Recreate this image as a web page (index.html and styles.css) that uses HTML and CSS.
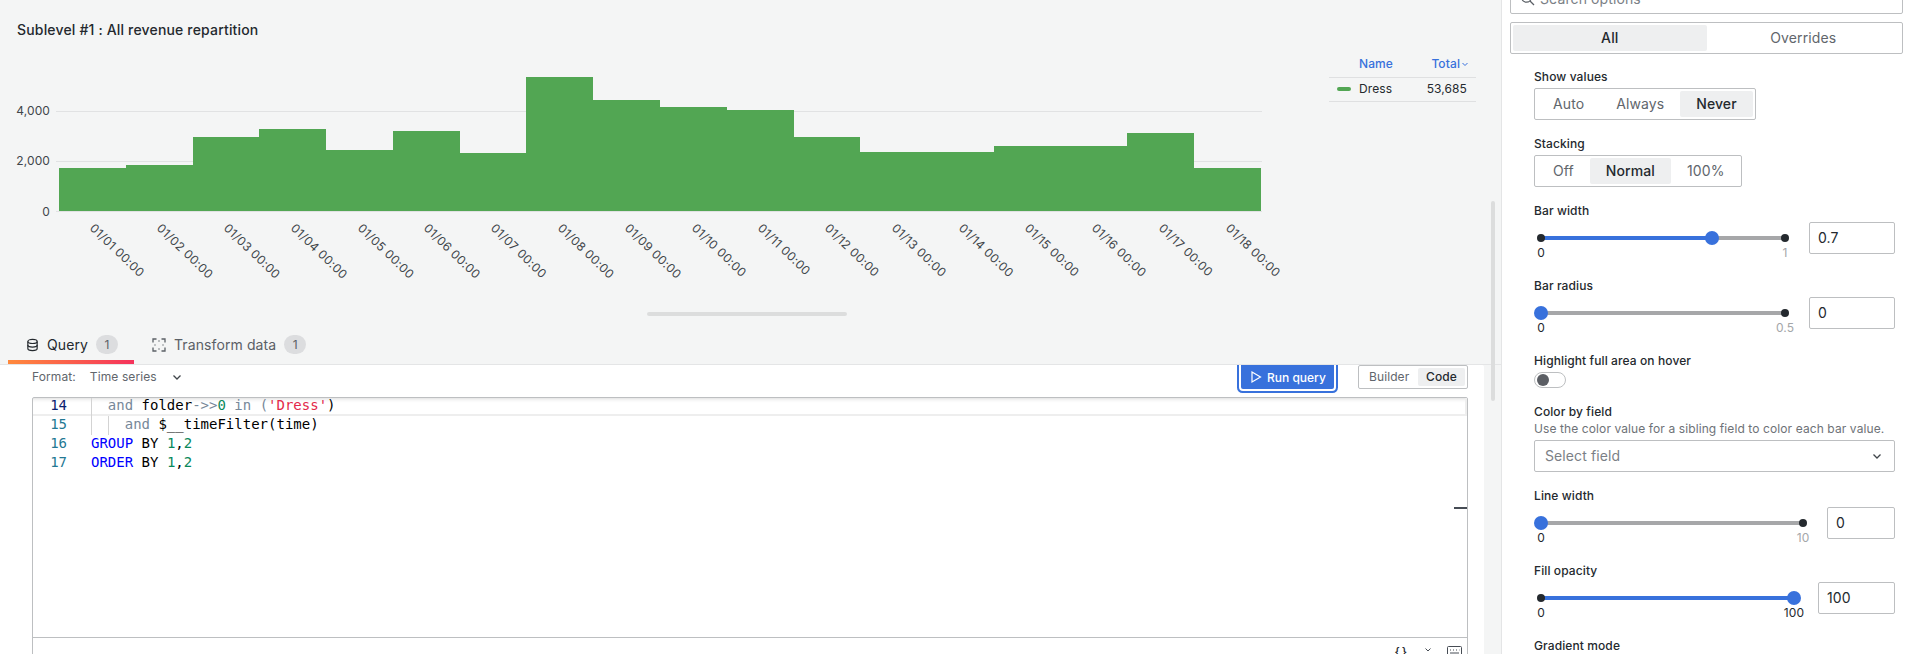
FILE: index.html
```html
<!DOCTYPE html>
<html lang="en">
<head>
  <meta charset="UTF-8" />
  <title>Edit panel</title>
  <link rel="stylesheet" href="styles.css">
</head>
<body>
  <div class="main">
    <div class="panel">
      <h2 class="panel-title">Sublevel #1 : All revenue repartition</h2>
      <div class="panel-body">
        <svg class="chart" width="1300" height="275" viewBox="0 50 1300 275">
          <g class="grid">
            <line x1="56" y1="111.5" x2="1262" y2="111.5" />
            <line x1="56" y1="161.5" x2="1262" y2="161.5" />
            <line x1="56" y1="211.5" x2="1262" y2="211.5" />
          </g>
          <g class="y-labels">
            <text x="50" y="115">4,000</text>
            <text x="50" y="165">2,000</text>
            <text x="50" y="216">0</text>
          </g>
          <g class="bars">
            <rect x="59" y="168" width="67" height="43" />
            <rect x="126" y="165" width="67" height="46" />
            <rect x="193" y="137" width="66" height="74" />
            <rect x="259" y="129" width="67" height="82" />
            <rect x="326" y="150" width="67" height="61" />
            <rect x="393" y="131" width="67" height="80" />
            <rect x="460" y="153" width="66" height="58" />
            <rect x="526" y="77" width="67" height="134" />
            <rect x="593" y="100" width="67" height="111" />
            <rect x="660" y="107" width="67" height="104" />
            <rect x="727" y="110" width="67" height="101" />
            <rect x="794" y="137" width="66" height="74" />
            <rect x="860" y="152" width="67" height="59" />
            <rect x="927" y="152" width="67" height="59" />
            <rect x="994" y="146" width="66" height="65" />
            <rect x="1060" y="146" width="67" height="65" />
            <rect x="1127" y="133" width="67" height="78" />
            <rect x="1194" y="168" width="67" height="43" />
          </g>
          <g class="x-labels">
            <text transform="translate(89 229) rotate(44)">01/01 00:00</text>
            <text transform="translate(156 229) rotate(44)">01/02 00:00</text>
            <text transform="translate(223 229) rotate(44)">01/03 00:00</text>
            <text transform="translate(290 229) rotate(44)">01/04 00:00</text>
            <text transform="translate(357 229) rotate(44)">01/05 00:00</text>
            <text transform="translate(423 229) rotate(44)">01/06 00:00</text>
            <text transform="translate(490 229) rotate(44)">01/07 00:00</text>
            <text transform="translate(557 229) rotate(44)">01/08 00:00</text>
            <text transform="translate(624 229) rotate(44)">01/09 00:00</text>
            <text transform="translate(691 229) rotate(44)">01/10 00:00</text>
            <text transform="translate(757 229) rotate(44)">01/11 00:00</text>
            <text transform="translate(824 229) rotate(44)">01/12 00:00</text>
            <text transform="translate(891 229) rotate(44)">01/13 00:00</text>
            <text transform="translate(958 229) rotate(44)">01/14 00:00</text>
            <text transform="translate(1024 229) rotate(44)">01/15 00:00</text>
            <text transform="translate(1091 229) rotate(44)">01/16 00:00</text>
            <text transform="translate(1158 229) rotate(44)">01/17 00:00</text>
            <text transform="translate(1225 229) rotate(44)">01/18 00:00</text>
          </g>
        </svg>
        <div class="legend">
          <div class="legend-head">
            <span class="legend-name">Name</span>
            <span class="legend-total">Total
              <svg width="6" height="8" viewBox="0 0 6 8"><path d="M0.500 3l2.500 2.500L5.500 3" /></svg>
            </span>
          </div>
          <div class="legend-row">
            <span class="swatch"></span>
            <span class="legend-name">Dress</span>
            <span class="legend-value">53,685</span>
          </div>
        </div>
      </div>
    </div>

    <div class="tabs">
      <div class="tab active">
        <svg class="tab-icon" width="14" height="14" viewBox="0 0 14 14">
          <ellipse cx="7" cy="3.2" rx="5" ry="2.2" />
          <path d="M2 3.2v7.6c0 1.2 2.2 2.2 5 2.2s5-1 5-2.2V3.2" />
          <path d="M2 7c0 1.2 2.2 2.2 5 2.2S12 8.200 12 7" />
        </svg>
        Query <span class="badge">1</span>
      </div>
      <div class="tab">
        <svg class="tab-icon" width="14" height="14" viewBox="0 0 14 14">
          <path d="M1 4.500V1h3.500M9.500 1H13v3.500M13 9.500V13H9.500M4.500 13H1V9.500" />
          <path d="M6.500 3h1M11 6.500v1M6.500 11h1M3 6.500v1" />
        </svg>
        Transform data <span class="badge">1</span>
      </div>
    </div>

    <div class="query">
      <div class="query-head">
        <span class="format-label">Format:</span>
        <span class="format-value">Time series</span>
        <svg class="chevron" width="16" height="16" viewBox="0 0 16 16"><path d="M4.500 6.500L8 10l3.500-3.500" /></svg>
        <button class="run-btn">
          <svg width="12" height="14" viewBox="0 0 12 14"><path d="M2 2l8.500 5L2 12z" /></svg>
          Run query
        </button>
        <div class="mode-switch">
          <span>Builder</span>
          <span class="selected">Code</span>
        </div>
      </div>
      <div class="editor">
        <div class="code">
          <div class="code-line current">
            <span class="line-no">14</span>
            <pre><span class="guide">  </span><span class="op">and</span> folder<span class="op">-&gt;&gt;</span><span class="num">0</span> <span class="op">in</span> <span class="op">(</span><span class="str">'Dress'</span>)</pre>
          </div>
          <div class="code-line">
            <span class="line-no">15</span>
            <pre><span class="guide">  </span><span class="guide">  </span><span class="op">and</span> $__timeFilter(time)</pre>
          </div>
          <div class="code-line">
            <span class="line-no">16</span>
            <pre><span class="kw">GROUP</span> BY <span class="num">1</span>,<span class="num">2</span></pre>
          </div>
          <div class="code-line">
            <span class="line-no">17</span>
            <pre><span class="kw">ORDER</span> BY <span class="num">1</span>,<span class="num">2</span></pre>
          </div>
          <div class="ruler-mark"></div>
        </div>
        <div class="editor-foot">
          <span class="braces">{}</span>
          <svg width="8" height="8" viewBox="0 0 8 8"><path d="M1.500 2.500L4 5l2.500-2.500" /></svg>
          <svg width="15" height="12" viewBox="0 0 15 12"><rect x="0.500" y="0.500" width="14" height="11" rx="1" /><path d="M3 4h1M6 4h1M9 4h1M12 4h0.500M3 7h9" /></svg>
        </div>
      </div>
    </div>

    <div class="scroll-x"></div>
    <div class="scroll-y"></div>
  </div>

  <div class="options">
    <div class="search">
      <svg width="15" height="15" viewBox="0 0 15 15"><circle cx="6.500" cy="6.500" r="4.700" /><path d="M10 10l4 4" /></svg>
      <span>Search options</span>
    </div>
    <div class="options-tabs">
      <span class="selected">All</span>
      <span>Overrides</span>
    </div>

    <div class="fields">
      <div class="field">
        <label>Show values</label>
        <div class="radio">
          <span>Auto</span>
          <span>Always</span>
          <span class="selected">Never</span>
        </div>
      </div>

      <div class="field">
        <label>Stacking</label>
        <div class="radio">
          <span>Off</span>
          <span class="selected">Normal</span>
          <span class="percent">100%</span>
        </div>
      </div>

      <div class="field">
        <label>Bar width</label>
        <div class="slider-row">
          <div class="slider">
            <div class="rail">
              <div class="rail-fill" style="width: 70%"></div>
              <span class="thumb" style="left: 70%"></span>
            </div>
            <div class="ticks"><span>0</span><span class="muted">1</span></div>
          </div>
          <div class="num-input wide">0.7</div>
        </div>
      </div>

      <div class="field">
        <label>Bar radius</label>
        <div class="slider-row">
          <div class="slider">
            <div class="rail">
              <div class="rail-fill" style="width: 0%"></div>
              <span class="thumb" style="left: 0%"></span>
            </div>
            <div class="ticks"><span>0</span><span class="muted">0.5</span></div>
          </div>
          <div class="num-input wide">0</div>
        </div>
      </div>

      <div class="field">
        <label>Highlight full area on hover</label>
        <div class="switch"><span class="knob"></span></div>
      </div>

      <div class="field">
        <label>Color by field</label>
        <p class="hint">Use the color value for a sibling field to color each bar value.</p>
        <div class="select">
          <span>Select field</span>
          <svg width="16" height="16" viewBox="0 0 16 16"><path d="M4.500 6.500L8 10l3.500-3.500" /></svg>
        </div>
      </div>

      <div class="field">
        <label>Line width</label>
        <div class="slider-row">
          <div class="slider">
            <div class="rail">
              <div class="rail-fill" style="width: 0%"></div>
              <span class="thumb" style="left: 0%"></span>
            </div>
            <div class="ticks"><span>0</span><span class="muted">10</span></div>
          </div>
          <div class="num-input narrow">0</div>
        </div>
      </div>

      <div class="field">
        <label>Fill opacity</label>
        <div class="slider-row">
          <div class="slider">
            <div class="rail">
              <div class="rail-fill" style="width: 100%"></div>
              <span class="thumb" style="left: 100%"></span>
            </div>
            <div class="ticks"><span>0</span><span>100</span></div>
          </div>
          <div class="num-input medium">100</div>
        </div>
      </div>

      <div class="field">
        <label>Gradient mode</label>
      </div>
    </div>
  </div>
</body>
</html>
```

FILE: styles.css
```css
* {
  box-sizing: border-box;
}

body {
  margin: 0;
  height: 654px;
  overflow: hidden;
  display: flex;
  background: #f4f5f5;
  color: #24292e;
  font-family: Inter, 'Liberation Sans', sans-serif;
  font-size: 12px;
  letter-spacing: 0.1px;
}

/* left side */
.main {
  position: relative;
  width: 1502px;
  flex: none;
  height: 654px;
  border-right: 1px solid #e4e5e6;
}

.panel {
  height: 325px;
}

.panel-title {
  margin: 0;
  padding: 20px 17px 10px;
  font-size: 14px;
  line-height: 20px;
  font-weight: 500;
  letter-spacing: 0.17px;
}

.panel-body {
  display: flex;
  height: 275px;
}

.chart {
  flex: none;
}

.grid line {
  stroke: #e1e2e3;
  stroke-width: 1;
}

.bars rect {
  fill: #52a653;
}

.chart text {
  font-size: 12px;
  fill: #41464b;
}

.x-labels text {
  letter-spacing: 0.35px;
}

.y-labels text {
  text-anchor: end;
}

.legend {
  width: 147px;
  margin: 1px 0 0 29px;
}

.legend-head,
.legend-row {
  display: flex;
  align-items: center;
  border-bottom: 1px solid #dfe0e1;
}

.legend-head {
  height: 27px;
  padding-left: 30px;
  padding-bottom: 2px;
  color: #3871dc;
  font-weight: 500;
}

.legend-total {
  margin-left: auto;
  padding-right: 8px;
  display: flex;
  align-items: center;
  gap: 2px;
}

.legend-total svg {
  fill: none;
  stroke: #3871dc;
  stroke-width: 1;
  margin-top: 2px;
}

.legend-row {
  height: 24px;
  padding: 0 9px 2px 8px;
}

.swatch {
  width: 14px;
  height: 4px;
  margin-right: 8px;
  background: #52a653;
  border-radius: 2px;
}

.legend-value {
  margin-left: auto;
}

/* query tabs */
.tabs {
  display: flex;
  height: 40px;
  padding-left: 8px;
  border-bottom: 1px solid #e4e5e6;
}

.tab {
  display: flex;
  align-items: center;
  height: 39px;
  padding: 4px 16px 0 18px;
  font-size: 14px;
  color: #5b6066;
  border-bottom: 4px solid transparent;
}

.tab.active {
  color: #24292e;
  border-image: linear-gradient(90deg, #ff8a3c, #f5325c) 1;
  border-radius: 2px;
}

.tab-icon {
  margin-right: 8px;
  fill: none;
  stroke: currentColor;
  stroke-width: 1.300;
}

.tab.active .tab-icon {
  width: 13px;
}

.badge {
  width: 22px;
  height: 19px;
  margin-left: 8px;
  border-radius: 10px;
  background: #dcdddf;
  color: #5b6066;
  font-size: 12px;
  line-height: 19px;
  text-align: center;
}

/* query editor */
.query {
  width: 1484px;
  height: 289px;
  background: #fff;
  border-top-right-radius: 2px;
  overflow: hidden;
}

.query-head {
  display: flex;
  align-items: flex-start;
  height: 32px;
  padding: 0 16px 0 32px;
  line-height: 24px;
  color: #61666c;
}

.format-value {
  margin-left: 14px;
}

.chevron {
  margin: 4px 0 0 12px;
  fill: none;
  stroke: #41464b;
  stroke-width: 1.300;
}

.run-btn {
  display: flex;
  align-items: center;
  gap: 5px;
  width: 93px;
  height: 32px;
  margin: -8px 24px 0 auto;
  padding: 8px 0 0 9px;
  border: none;
  border-radius: 2px;
  background: #3871dc;
  box-shadow: 0 0 0 2px #fff, 0 0 0 4px #3871dc;
  color: #fff;
  font-family: inherit;
  font-size: 12px;
  font-weight: 500;
  white-space: nowrap;
}

.run-btn svg {
  fill: none;
  stroke: #fff;
  stroke-width: 1.200;
}

.mode-switch {
  display: flex;
  width: 110px;
  height: 24px;
  padding: 2px;
  justify-content: space-between;
  border: 1px solid #bdbfc1;
  border-radius: 2px;
  line-height: 18px;
}

.mode-switch span {
  padding: 0 8px;
}

.mode-switch .selected {
  width: 47px;
  background: #eeeff0;
  color: #24292e;
  font-weight: 500;
  border-radius: 2px;
}

.editor {
  height: 300px;
  margin-right: 16px;
  margin-left: 32px;
  border: 1px solid #bdbfc1;
  border-radius: 2px;
}

.code {
  position: relative;
  height: 240px;
  border-bottom: 1px solid #bdbfc1;
  box-shadow: inset 0 6px 5px -6px #ccc;
  font-family: 'DejaVu Sans Mono', monospace;
  font-size: 14px;
  letter-spacing: 0;
  color: #000;
}

.code-line {
  display: flex;
  height: 19px;
  line-height: 17px;
}

.code-line.current {
  height: 18px;
  line-height: 15px;
  border-bottom: 2px solid #eeeeee;
  border-right: 2px solid #eeeeee;
}

.line-no {
  flex: none;
  width: 58px;
  padding-right: 24px;
  text-align: right;
  color: #237893;
}

.current .line-no {
  color: #0b216f;
}

pre {
  margin: 0;
  font: inherit;
}

.guide {
  box-shadow: inset 1px 0 0 #d3d3d3;
  display: inline-block;
  height: 19px;
}

.op {
  color: #778899;
}

.num {
  color: #09885a;
}

.str {
  color: #e3284a;
}

.kw {
  color: #0000ff;
}

.ruler-mark {
  position: absolute;
  top: 109px;
  right: 0;
  width: 13px;
  height: 2px;
  background: #464c54;
}

.editor-foot {
  display: flex;
  justify-content: flex-end;
  align-items: flex-start;
  gap: 15px;
  padding: 8px 5px 0 0;
  height: 30px;
  color: #24292e;
}

.editor-foot svg {
  fill: none;
  stroke: #464c54;
  stroke-width: 1;
}

.braces {
  line-height: 12px;
  font-size: 12px;
  font-weight: 500;
  letter-spacing: 2px;
}

.scroll-x {
  position: absolute;
  top: 312px;
  left: 647px;
  width: 200px;
  height: 4px;
  border-radius: 2px;
  background: #dcdddd;
}

.scroll-y {
  position: absolute;
  top: 201px;
  left: 1491px;
  width: 4px;
  height: 200px;
  border-radius: 2px;
  background: #dcdddd;
}

/* options pane */
.options {
  flex: 1;
  height: 654px;
  padding: 0 5px 0 8px;
  background: #fff;
}

.search {
  display: flex;
  align-items: center;
  gap: 5px;
  height: 32px;
  margin-top: -18px;
  padding-left: 9px;
  border: 1px solid #bdbfc1;
  border-radius: 2px;
  font-size: 14px;
  color: #7b7f86;
}

.search svg {
  fill: none;
  stroke: #5b6066;
  stroke-width: 1.300;
}

.options-tabs {
  display: flex;
  height: 32px;
  margin-top: 8px;
  padding: 2px;
  border: 1px solid #bdbfc1;
  border-radius: 2px;
  font-size: 14px;
  line-height: 26px;
  text-align: center;
  color: #61666c;
}

.options-tabs span {
  flex: 1;
}

.selected {
  background: #eeeff0;
  color: #24292e;
  border-radius: 2px;
}

.options-tabs .selected {
  font-weight: 500;
}

.fields {
  padding: 14px 8px 0 24px;
}

.field {
  margin-bottom: 15px;
}

.field label {
  display: block;
  margin-bottom: 2px;
  font-weight: 500;
  line-height: 18px;
}

.radio {
  display: inline-flex;
  height: 32px;
  padding: 2px;
  border: 1px solid #bdbfc1;
  border-radius: 2px;
  font-size: 14px;
  line-height: 26px;
  color: #61666c;
}

.radio span {
  padding: 0 16px;
}

.radio .percent {
  padding-right: 14px;
}

.radio .selected {
  color: #24292e;
  font-weight: 500;
}

.slider-row {
  display: flex;
  align-items: flex-start;
  margin-bottom: 17px;
}

.slider {
  flex: 1;
  padding: 14px 24px 0 7px;
  height: 38px;
}

.rail {
  position: relative;
  height: 4px;
  margin-bottom: 6px;
  background: #a6a7a9;
}

.rail::before,
.rail::after {
  content: '';
  position: absolute;
  top: -2px;
  width: 8px;
  height: 8px;
  border-radius: 50%;
  background: #24292e;
}

.rail::before {
  left: -4px;
}

.rail::after {
  right: -4px;
}

.rail-fill {
  height: 4px;
  background: #3871dc;
}

.thumb {
  position: absolute;
  z-index: 1;
  top: -5px;
  width: 14px;
  height: 14px;
  margin-left: -7px;
  border-radius: 50%;
  background: #3871dc;
}

.ticks {
  display: flex;
  justify-content: space-between;
  line-height: 14px;
}

.ticks span {
  display: flex;
  justify-content: center;
  width: 0;
}

.ticks .muted {
  color: #a4a6a9;
}

.num-input {
  flex: none;
  height: 32px;
  padding-left: 8px;
  border: 1px solid #bdbfc1;
  border-radius: 2px;
  font-size: 14px;
  line-height: 30px;
}

.wide {
  width: 86px;
}

.medium {
  width: 77px;
}

.narrow {
  width: 68px;
}

.switch {
  position: relative;
  width: 32px;
  height: 16px;
  border: 1px solid #bdbfc1;
  border-radius: 8px;
}

.knob {
  position: absolute;
  top: 1px;
  left: 2px;
  width: 12px;
  height: 12px;
  border-radius: 50%;
  background: #5b5e64;
}

.hint {
  margin: -2px 0 3px;
  line-height: 16px;
  color: #6e7277;
}

.select {
  display: flex;
  align-items: center;
  justify-content: space-between;
  height: 32px;
  padding: 0 9px 1px 10px;
  border: 1px solid #bdbfc1;
  border-radius: 2px;
  font-size: 14px;
  color: #7b7f86;
}

.select svg {
  fill: none;
  stroke: #41464b;
  stroke-width: 1.300;
}
```
